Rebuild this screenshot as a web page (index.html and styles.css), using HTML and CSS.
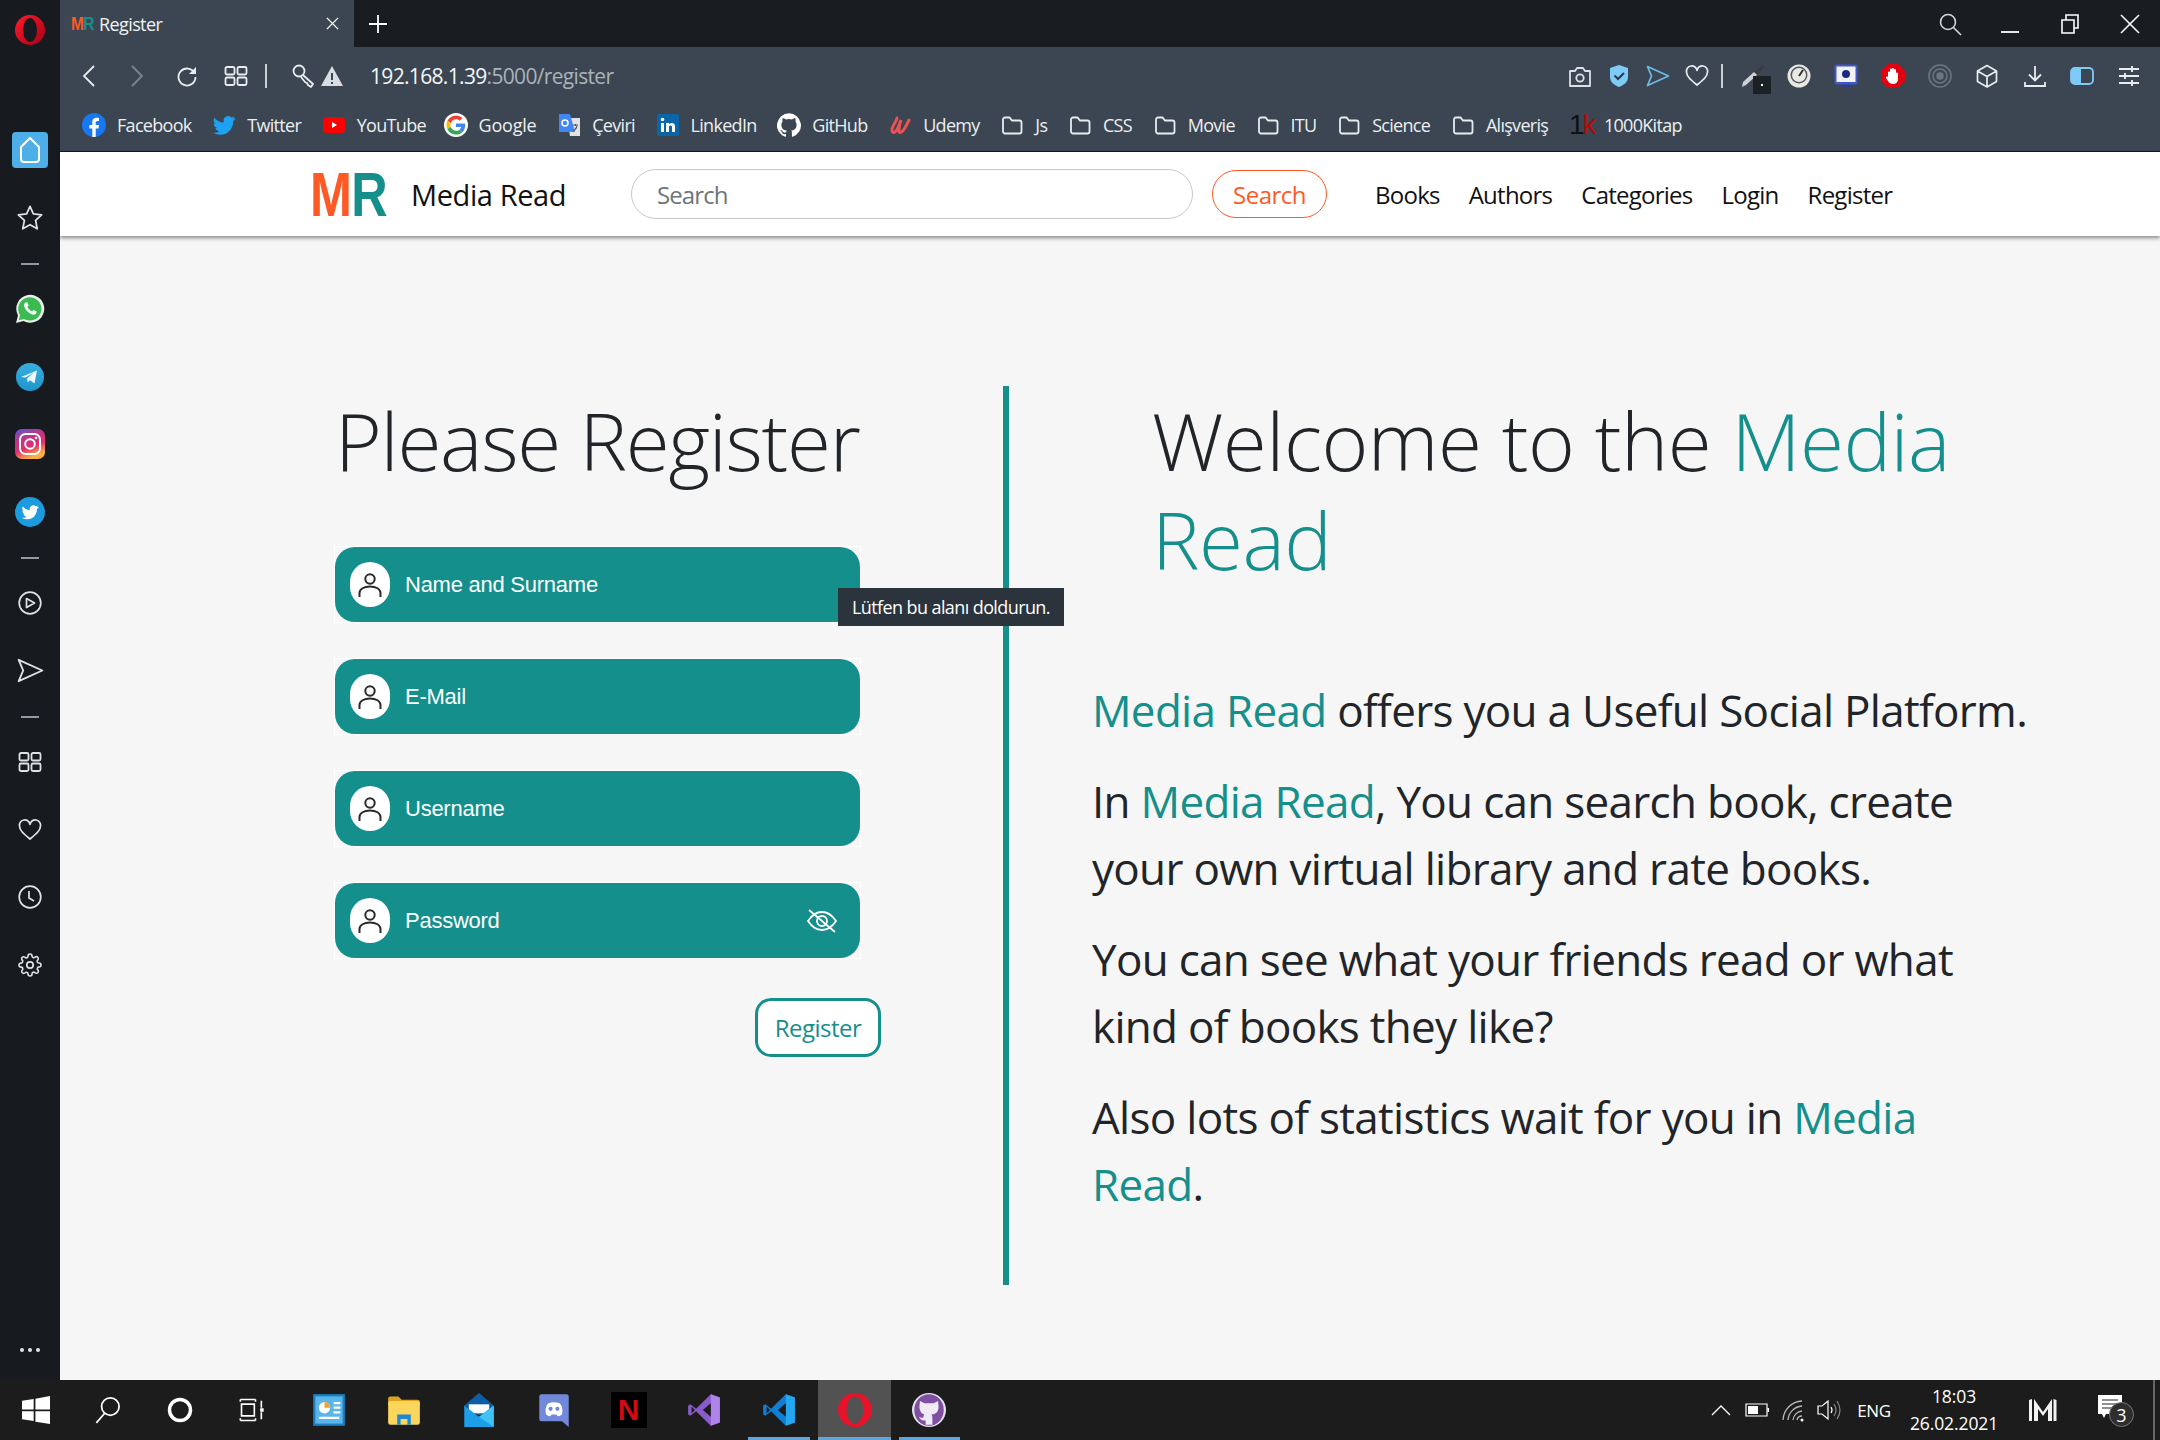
FILE: index.html
```html
<!DOCTYPE html>
<html lang="en">
<head>
<meta charset="utf-8">
<title>Register</title>
<link rel="stylesheet" href="styles.css">
</head>
<body>
<svg class="defs" width="0" height="0">
  <defs>
    <symbol id="folder" viewBox="0 0 24 24"><path d="M3 6.500a2 2 0 0 1 2-2h4.500l2.500 3h7.500a2 2 0 0 1 2 2v9a2 2 0 0 1-2 2H5a2 2 0 0 1-2-2z" fill="none" stroke="#e8ecef" stroke-width="1.800"/></symbol>
    <symbol id="person" viewBox="0 0 24 24"><circle cx="12" cy="6" r="4.700" fill="none" stroke="#2a2a2a" stroke-width="2"/><path d="M1.500 24v-4c0-4 4.500-6.500 10.500-6.500s10.500 2.500 10.500 6.500v4" fill="none" stroke="#2a2a2a" stroke-width="2"/></symbol>
    <symbol id="bird" viewBox="0 0 24 24"><path d="M23 5.100c-.8.4-1.700.6-2.600.7.900-.6 1.700-1.400 2-2.500-.9.500-1.900.9-2.900 1.100A4.600 4.600 0 0 0 11.700 8.600c0 .4 0 .7.1 1A13 13 0 0 1 2.400 4.800a4.600 4.600 0 0 0 1.400 6.100c-.7 0-1.400-.2-2.100-.6v.1c0 2.200 1.600 4.100 3.700 4.500-.7.2-1.400.2-2.100.1.600 1.800 2.300 3.100 4.300 3.200A9.300 9.300 0 0 1 1 19.700 13 13 0 0 0 8.100 21.800c8.500 0 13.100-7 13.100-13.100v-.6c.9-.6 1.700-1.400 2.300-2.300z"/></symbol>
    <symbol id="send" viewBox="0 0 24 24"><path d="M1.500 2.500l21 9.500-21 9.500 4-9.500z" fill="none" stroke="currentColor" stroke-width="1.700" stroke-linejoin="round"/></symbol>
    <symbol id="heart" viewBox="0 0 24 24"><path d="M12 21C6 16 1.500 12.500 1.500 8a5.200 5.200 0 0 1 10.500-1.500A5.200 5.200 0 0 1 22.500 8c0 4.500-4.500 8-10.500 13z" fill="none" stroke="currentColor" stroke-width="1.700" stroke-linejoin="round"/></symbol>
    <symbol id="grid" viewBox="0 0 24 24"><g fill="none" stroke="currentColor" stroke-width="1.800"><rect x="1.500" y="3" width="9" height="7.500" rx="1.500"/><rect x="13.500" y="3" width="9" height="7.500" rx="1.500"/><rect x="1.500" y="13.500" width="9" height="7.500" rx="1.500"/><rect x="13.500" y="13.500" width="9" height="7.500" rx="1.500"/></g></symbol>
  </defs>
</svg>

<div class="app">
  <aside class="sidebar">
    <div class="side-logo">
      <svg width="30" height="30" viewBox="0 0 30 30"><defs><linearGradient id="opg" x1="0" y1="0" x2="1" y2="1"><stop offset="0" stop-color="#ff1b2d"/><stop offset="1" stop-color="#a70014"/></linearGradient></defs><ellipse cx="15" cy="15" rx="15" ry="15" fill="url(#opg)"/><ellipse cx="15" cy="15" rx="7" ry="12" fill="#171b20"/></svg>
    </div>
    <div class="side-slot">
      <span class="side-home"><svg width="24" height="28" viewBox="0 0 24 28"><path d="M12 2L3 11v12a3 3 0 0 0 3 3h12a3 3 0 0 0 3-3V11z" fill="none" stroke="#fff" stroke-width="2" stroke-linejoin="round"/></svg></span>
    </div>
    <div class="side-slot"><svg class="side-ic side-ic-star" viewBox="0 0 24 24"><path d="M12 2l2.900 6.500 7.100.8-5.200 4.800 1.400 7.200L12 17.700l-6.200 3.600 1.400-7.200L2 9.300l7.100-.8z" fill="none" stroke="currentColor" stroke-width="1.500" stroke-linejoin="round"/></svg></div>
    <div class="side-dash"></div>
    <div class="side-slot">
      <svg class="side-ic" viewBox="0 0 30 30"><path d="M1 29l2-7.500A14 14 0 1 1 8.500 27z" fill="#e9efe9"/><path d="M3.800 26.200l1.300-4.900A11.600 11.600 0 1 1 9 25z" fill="#3cba52"/><path d="M10.500 8.500c-1 .6-1.800 2-1.300 3.800 1 3.500 4.500 7.200 8.300 8.300 1.800.5 3.200-.4 3.800-1.300l.3-1.800-3.200-1.600-1.300 1.500c-2-.8-4-2.700-4.800-4.700l1.400-1.300-1.400-3.200z" fill="#fff"/></svg>
    </div>
    <div class="side-slot">
      <svg class="side-ic" viewBox="0 0 30 30"><defs><linearGradient id="tg" x1="0" y1="0" x2="0" y2="1"><stop offset="0" stop-color="#37aee2"/><stop offset="1" stop-color="#1e96c8"/></linearGradient></defs><circle cx="15" cy="15" r="14" fill="url(#tg)"/><path d="M6 15l16-6.500-2.500 13-4.500-3.300-2.300 2.300-.5-4.300 7-6.200-8.500 5.400z" fill="#eef7fb"/></svg>
    </div>
    <div class="side-slot">
      <svg class="side-ic" viewBox="0 0 30 30"><defs><linearGradient id="ig" x1="0" y1="0" x2="0.400" y2="1"><stop offset="0" stop-color="#5b51d8"/><stop offset="0.400" stop-color="#c13584"/><stop offset="0.700" stop-color="#e1306c"/><stop offset="1" stop-color="#fcaf45"/></linearGradient></defs><rect width="30" height="30" rx="7" fill="url(#ig)"/><rect x="5" y="5" width="20" height="20" rx="5.500" fill="none" stroke="#fff" stroke-width="2"/><circle cx="15" cy="15" r="4.800" fill="none" stroke="#fff" stroke-width="2"/><circle cx="21" cy="9" r="1.300" fill="#fff"/></svg>
    </div>
    <div class="side-slot">
      <svg class="side-ic" viewBox="0 0 30 30"><circle cx="15" cy="15" r="15" fill="#1d9bdf"/><svg x="6" y="6" width="18" height="18" fill="#fff"><use href="#bird"/></svg></svg>
    </div>
    <div class="side-dash"></div>
    <div class="side-slot">
      <svg class="side-ic side-ic-sm" viewBox="0 0 24 24"><circle cx="12" cy="12" r="10.800" fill="none" stroke="currentColor" stroke-width="1.700"/><path d="M8.500 7.500l8 4.500-8 4.500z" fill="none" stroke="currentColor" stroke-width="1.700" stroke-linejoin="round"/></svg>
    </div>
    <div class="side-slot"><svg class="side-ic side-ic-md"><use href="#send"/></svg></div>
    <div class="side-dash"></div>
    <div class="side-slot"><svg class="side-ic side-ic-sm"><use href="#grid"/></svg></div>
    <div class="side-slot"><svg class="side-ic side-ic-sm"><use href="#heart"/></svg></div>
    <div class="side-slot">
      <svg class="side-ic side-ic-sm" viewBox="0 0 24 24"><circle cx="12" cy="12" r="10.800" fill="none" stroke="currentColor" stroke-width="1.700"/><path d="M11 6v7l5 3" fill="none" stroke="currentColor" stroke-width="1.700"/></svg>
    </div>
    <div class="side-slot">
      <svg class="side-ic side-ic-sm" viewBox="0 0 24 24"><circle cx="12" cy="12" r="3.200" fill="none" stroke="currentColor" stroke-width="1.700"/><path d="M19.400 15a1.650 1.650 0 0 0 .33 1.820l.06.06a2 2 0 0 1 0 2.830 2 2 0 0 1-2.830 0l-.06-.06a1.650 1.650 0 0 0-1.820-.33 1.650 1.650 0 0 0-1 1.510V21a2 2 0 0 1-2 2 2 2 0 0 1-2-2v-.09A1.650 1.650 0 0 0 9 19.400a1.650 1.650 0 0 0-1.820.33l-.06.06a2 2 0 0 1-2.830 0 2 2 0 0 1 0-2.830l.06-.06a1.650 1.650 0 0 0 .33-1.820 1.650 1.650 0 0 0-1.510-1H3a2 2 0 0 1-2-2 2 2 0 0 1 2-2h.09A1.650 1.650 0 0 0 4.600 9a1.650 1.650 0 0 0-.33-1.820l-.06-.06a2 2 0 0 1 0-2.830 2 2 0 0 1 2.830 0l.06.06a1.650 1.650 0 0 0 1.820.33H9a1.650 1.650 0 0 0 1-1.510V3a2 2 0 0 1 2-2 2 2 0 0 1 2 2v.09a1.650 1.650 0 0 0 1 1.510 1.650 1.650 0 0 0 1.820-.33l.06-.06a2 2 0 0 1 2.830 0 2 2 0 0 1 0 2.830l-.06.06a1.650 1.650 0 0 0-.33 1.820V9a1.650 1.650 0 0 0 1.510 1H21a2 2 0 0 1 2 2 2 2 0 0 1-2 2h-.09a1.650 1.650 0 0 0-1.510 1z" fill="none" stroke="currentColor" stroke-width="1.600" stroke-linejoin="round"/></svg>
    </div>
    <div class="side-more"><i></i><i></i><i></i></div>
  </aside>

  <div class="content">
    <header class="browser">
      <div class="tabstrip">
        <div class="tab">
          <span class="mini-logo"><span class="mini-m">M</span><span class="mini-r">R</span></span>
          <span class="tab-title">Register</span>
          <svg class="tab-close" viewBox="0 0 16 16"><path d="M2 2l12 12M14 2L2 14" stroke="#fff" stroke-width="1.500"/></svg>
        </div>
        <svg class="tab-add" viewBox="0 0 18 18"><path d="M9 0v18M0 9h18" stroke="#fff" stroke-width="1.800"/></svg>
        <div class="win-ctrls">
          <svg class="win-ic" viewBox="0 0 24 24"><circle cx="10" cy="10" r="7.500" fill="none" stroke="#d5d8dc" stroke-width="1.600"/><path d="M15.500 15.500L23 23" stroke="#d5d8dc" stroke-width="1.600"/></svg>
          <svg class="win-ic" viewBox="0 0 24 24"><path d="M3 20h18" stroke="#fff" stroke-width="1.800"/></svg>
          <svg class="win-ic" viewBox="0 0 24 24"><path d="M4 8h12v13H4zM8 8V3h12v13h-4" fill="none" stroke="#fff" stroke-width="1.600"/></svg>
          <svg class="win-ic" viewBox="0 0 24 24"><path d="M3 3l18 18M21 3L3 21" stroke="#fff" stroke-width="1.600"/></svg>
        </div>
      </div>

      <div class="toolbar">
        <svg class="tb-ic" viewBox="0 0 24 24"><path d="M16 2L6 12l10 10" fill="none" stroke="#e8ecef" stroke-width="1.800"/></svg>
        <svg class="tb-ic" viewBox="0 0 24 24"><path d="M8 2l10 10L8 22" fill="none" stroke="#7b858f" stroke-width="1.800"/></svg>
        <svg class="tb-ic tb-wide" viewBox="0 0 24 24"><path d="M19.500 9A8.500 8.500 0 1 0 20.500 13" fill="none" stroke="#e8ecef" stroke-width="1.800"/><path d="M21 3v7h-7z" fill="#e8ecef"/></svg>
        <svg class="tb-ic tb-icon-light tb-gridbtn"><use href="#grid"/></svg>
        <span class="tb-sep"></span>
        <svg class="tb-ic tb-key" viewBox="0 0 24 24"><circle cx="8" cy="7" r="5.500" fill="none" stroke="#e8ecef" stroke-width="1.800"/><path d="M12 11l10 9-2 3-3-2-1-2-2-1-4-5" fill="none" stroke="#e8ecef" stroke-width="1.800" stroke-linejoin="round"/></svg>
        <svg class="tb-ic tb-warn" viewBox="0 0 24 24"><path d="M12 2L1 22h22z" fill="#d9dce0"/><path d="M12 9v7M12 18v2" stroke="#3b4652" stroke-width="2"/></svg>
        <div class="url"><span class="url-host">192.168.1.39</span>:5000/register</div>
        <div class="tb-right">
          <div class="tb-group tb-group-tight">
            <svg class="tb-ic" viewBox="0 0 24 24"><path d="M2 7h5l2-3h6l2 3h5v15H2z" fill="none" stroke="#dde1e5" stroke-width="1.800" stroke-linejoin="round"/><circle cx="12" cy="14" r="3.700" fill="none" stroke="#dde1e5" stroke-width="1.800"/></svg>
            <svg class="tb-ic" viewBox="0 0 24 24"><path d="M12 1l9 3v9c0 5-4 8-9 10-5-2-9-5-9-10V4z" fill="#7fcbf7"/><path d="M7.500 11.500l3.500 3.500 6-6" fill="none" stroke="#2d3a46" stroke-width="2"/></svg>
            <svg class="tb-ic tb-blue"><use href="#send"/></svg>
            <svg class="tb-ic tb-icon-light"><use href="#heart"/></svg>
          </div>
          <span class="tb-sep tb-sep-right"></span>
          <div class="tb-group">
            <span class="tb-dropper">
              <svg class="tb-ic" viewBox="0 0 24 24"><path d="M23 1l1 2-7 8-3-3z" fill="#3c3c3c"/><path d="M14 8l3 3L6 21l-4 2 1-5z" fill="#cfd2d5"/></svg>
              <span class="dropper-badge"><i></i></span>
            </span>
            <svg class="tb-ic" viewBox="0 0 24 24"><circle cx="12" cy="12" r="11.500" fill="#e8e8e4"/><circle cx="12" cy="11" r="8.500" fill="#57595b"/><circle cx="12" cy="11" r="7" fill="#e8e8e4"/><path d="M12 12l4-6" stroke="#333" stroke-width="2"/></svg>
            <svg class="tb-ic" viewBox="0 0 24 24"><path d="M7 19h10l-1.500 4h-7z" fill="#2a3c8f"/><rect x="0.500" y="0.500" width="23" height="20" rx="1.500" fill="#3f57c8"/><rect x="2.500" y="2.500" width="19" height="15.500" fill="#f0f2f6"/><circle cx="12" cy="10" r="4" fill="#1b2a7d"/></svg>
            <svg class="tb-ic" viewBox="0 0 24 24"><path d="M7 0h10l7 7v10l-7 7H7l-7-7V7z" fill="#e3000f"/><path d="M7 13V8.500a1 1 0 0 1 2 0V5.500a1 1 0 0 1 2 0V5a1 1 0 0 1 2 0v1a1 1 0 0 1 2 0v3.500a1 1 0 0 1 2 0V15c0 3-2 5-5 5-2.500 0-4-1-5-3l-2-3c-.5-1 1-2 2-1z" fill="#fff"/></svg>
            <svg class="tb-ic" viewBox="0 0 24 24"><g fill="none" stroke="#6e7780" stroke-width="1.500"><circle cx="12" cy="12" r="11"/><circle cx="12" cy="12" r="7"/><circle cx="12" cy="12" r="3" fill="#6e7780"/></g></svg>
            <svg class="tb-ic" viewBox="0 0 24 24"><path d="M12 1.500l9.500 5.500v10.500L12 23l-9.500-5.500V7zM2.500 7l9.500 5.500L21.500 7M12 12.500V23" fill="none" stroke="#e8ecef" stroke-width="1.700" stroke-linejoin="round"/></svg>
            <svg class="tb-ic" viewBox="0 0 24 24"><path d="M12 2v14M6 10.500l6 6 6-6M2 18v4h20v-4" fill="none" stroke="#e8ecef" stroke-width="1.800"/></svg>
            <svg class="tb-ic" viewBox="0 0 24 24"><rect x="1" y="4" width="22" height="16" rx="4" fill="none" stroke="#7fcbf7" stroke-width="1.800"/><path d="M5 4h6v16H5a4 4 0 0 1-4-4V8a4 4 0 0 1 4-4z" fill="#7fcbf7"/></svg>
            <svg class="tb-ic" viewBox="0 0 24 24"><path d="M2 5h20M2 12h20M2 19h20M15 2v6M8 9v6M15 16v6" fill="none" stroke="#e8ecef" stroke-width="1.900"/></svg>
          </div>
        </div>
      </div>

      <nav class="bookmarks">
        <span class="bm"><svg class="bm-ic" viewBox="0 0 24 24"><circle cx="12" cy="12" r="12" fill="#1877f2"/><path d="M16.500 15.500l.5-3.500h-3.300V9.800c0-1 .5-1.900 2-1.900H17V5c-2.800-.6-6.700-.6-6.700 4.200V12H7.300v3.500h3V24h3.400v-8.500z" fill="#fff"/></svg>Facebook</span>
        <span class="bm"><svg class="bm-ic bm-tw"><use href="#bird"/></svg>Twitter</span>
        <span class="bm"><svg class="bm-ic" viewBox="0 0 24 24"><rect x="1" y="4" width="22" height="16" rx="4" fill="#f00"/><path d="M10 9l5 3-5 3z" fill="#fff"/></svg>YouTube</span>
        <span class="bm bm-g"><svg class="bm-ic" viewBox="-6 -6 60 60"><circle cx="24" cy="24" r="30" fill="#fff"/><path fill="#EA4335" d="M24 9.500c3.540 0 6.710 1.220 9.210 3.600l6.850-6.850C35.900 2.380 30.470 0 24 0 14.620 0 6.510 5.380 2.560 13.220l7.980 6.190C12.430 13.720 17.740 9.500 24 9.500z"/><path fill="#4285F4" d="M46.980 24.550c0-1.570-.15-3.090-.38-4.550H24v9.020h12.940c-.58 2.960-2.260 5.480-4.780 7.180l7.730 6c4.510-4.180 7.090-10.360 7.090-17.650z"/><path fill="#FBBC05" d="M10.530 28.590c-.48-1.450-.76-2.990-.76-4.590s.27-3.140.76-4.590l-7.980-6.190C.92 16.460 0 20.120 0 24c0 3.880.92 7.540 2.560 10.780l7.970-6.190z"/><path fill="#34A853" d="M24 48c6.480 0 11.930-2.130 15.890-5.810l-7.730-6c-2.150 1.450-4.920 2.300-8.160 2.300-6.260 0-11.570-4.220-13.470-9.910l-7.980 6.190C6.510 42.620 14.620 48 24 48z"/></svg>Google</span>
        <span class="bm"><svg class="bm-ic" viewBox="0 0 24 24"><path d="M10 5h13v18H13z" fill="#dfe2e6"/><path d="M2 1h11l5 18H2z" fill="#4285f4"/><path d="M16 12h5M18.500 11v2M20 13c-.5 2-2 4-3.500 5" stroke="#555" stroke-width="1.200" fill="none"/><circle cx="8" cy="10" r="3" fill="none" stroke="#fff" stroke-width="1.500"/></svg>Çeviri</span>
        <span class="bm"><svg class="bm-ic" viewBox="0 0 24 24"><rect x="1" y="1" width="22" height="22" rx="2" fill="#0a66a8"/><path d="M5 10h3v9H5zM10 10h3v1.500c1-2 6-2.500 6 2V19h-3v-5c0-2-3-2-3 0v5h-3z" fill="#fff"/><circle cx="6.500" cy="6.500" r="1.800" fill="#fff"/></svg>LinkedIn</span>
        <span class="bm"><svg class="bm-ic bm-gh" viewBox="0 0 24 24"><path d="M12 .3a12 12 0 0 0-3.800 23.400c.6.100.8-.3.8-.6v-2c-3.300.7-4-1.600-4-1.600-.5-1.400-1.300-1.800-1.300-1.800-1.100-.7.100-.7.100-.7 1.200.1 1.800 1.200 1.800 1.200 1.100 1.800 2.800 1.300 3.500 1 .1-.8.400-1.300.8-1.600-2.700-.3-5.500-1.300-5.500-5.900 0-1.300.5-2.400 1.200-3.200-.1-.3-.5-1.500.1-3.200 0 0 1-.3 3.300 1.200a11.500 11.500 0 0 1 6 0c2.300-1.500 3.300-1.200 3.300-1.200.7 1.700.2 2.900.1 3.200.8.800 1.200 1.900 1.200 3.200 0 4.600-2.800 5.600-5.500 5.900.4.400.8 1.100.8 2.200v3.300c0 .3.200.7.8.6A12 12 0 0 0 12 .3z"/></svg>GitHub</span>
        <span class="bm"><svg class="bm-ic" viewBox="0 0 24 24"><path d="M9 5C8 10 3 14 4 18c1 3 4 1 6-3l3-8c-2 6-3 12-1 12.500 2.500.5 6-6 9-12.500" fill="none" stroke="#ec5252" stroke-width="3" stroke-linecap="round"/></svg>Udemy</span>
        <span class="bm"><svg class="bm-ic"><use href="#folder"/></svg>Js</span>
        <span class="bm"><svg class="bm-ic"><use href="#folder"/></svg>CSS</span>
        <span class="bm"><svg class="bm-ic"><use href="#folder"/></svg>Movie</span>
        <span class="bm"><svg class="bm-ic"><use href="#folder"/></svg>ITU</span>
        <span class="bm"><svg class="bm-ic"><use href="#folder"/></svg>Science</span>
        <span class="bm"><svg class="bm-ic"><use href="#folder"/></svg>Alışveriş</span>
        <span class="bm"><span class="bm-1k"><span class="k1">1</span><span class="k2">k</span></span>1000Kitap</span>
      </nav>
    </header>

    <div class="site">
      <div class="site-nav">
        <a class="brand"><span class="brand-logo"><span class="logo-m">M</span><span class="logo-r">R</span></span><span class="brand-name">Media Read</span></a>
        <div class="search-box">Search</div>
        <button class="search-btn">Search</button>
        <ul class="nav-links">
          <li>Books</li><li>Authors</li><li>Categories</li><li>Login</li><li>Register</li>
        </ul>
      </div>

      <main class="page">
        <section class="col-form">
          <h1 class="title">Please Register</h1>
          <form class="form">
            <div class="field">
              <div class="field-inner"><span class="field-ic"><svg><use href="#person"/></svg></span><span class="field-text">Name and Surname</span></div>
              <div class="tooltip">Lütfen bu alanı doldurun.</div>
            </div>
            <div class="field"><div class="field-inner"><span class="field-ic"><svg><use href="#person"/></svg></span><span class="field-text">E-Mail</span></div></div>
            <div class="field"><div class="field-inner"><span class="field-ic"><svg><use href="#person"/></svg></span><span class="field-text">Username</span></div></div>
            <div class="field">
              <div class="field-inner"><span class="field-ic"><svg><use href="#person"/></svg></span><span class="field-text">Password</span>
                <svg class="eye" viewBox="0 0 32 24"><g fill="none" stroke="#fff" stroke-width="1.800"><path d="M2 12c4-6 9-9 14-9s10 3 14 9c-4 6-9 9-14 9S6 18 2 12z"/><circle cx="16" cy="12" r="5"/><path d="M3 1l26 22"/></g></svg>
              </div>
            </div>
            <div class="form-actions"><button class="register-btn" type="button">Register</button></div>
          </form>
        </section>
        <section class="col-info">
          <h1 class="title title-info">Welcome to the <span class="teal">Media Read</span></h1>
          <p><span class="teal">Media Read</span> offers you a Useful Social Platform.</p>
          <p>In <span class="teal">Media Read</span>, You can search book, create your own virtual library and rate books.</p>
          <p>You can see what your friends read or what kind of books they like?</p>
          <p>Also lots of statistics wait for you in <span class="teal">Media Read</span>.</p>
        </section>
      </main>
    </div>
  </div>

  <footer class="taskbar">
    <span class="ts"><svg class="ts-ic" viewBox="0 0 24 24"><path d="M0 4l10-1.500v9H0zM11.500 2.300L24 0v11.500H11.500zM0 13h10v8.500L0 20zM11.500 13H24v11l-12.500-2z" fill="#fff"/></svg></span>
    <span class="ts"><svg class="ts-ic" viewBox="0 0 24 24"><circle cx="14" cy="9" r="7.500" fill="none" stroke="#fff" stroke-width="1.500"/><path d="M9 15L2 23" stroke="#fff" stroke-width="1.500"/></svg></span>
    <span class="ts"><svg class="ts-ic" viewBox="0 0 24 24"><circle cx="12" cy="12" r="9" fill="none" stroke="#fff" stroke-width="3"/></svg></span>
    <span class="ts"><svg class="ts-ic" viewBox="0 0 24 24"><path d="M2 3h13M2 21h13M3 7h11v10H3zM2 3v2M15 3v2M2 19v2M15 19v2M20 4v6M20 14v6" fill="none" stroke="#fff" stroke-width="1.400"/><rect x="19" y="10.500" width="3" height="3" fill="#fff"/></svg></span>
    <span class="ts ts-app ts-first"><svg class="ts-ic ts-big" viewBox="0 0 30 30"><rect x="1" y="1" width="28" height="28" fill="#1a7fc3"/><rect x="3" y="3" width="24" height="24" fill="#5ab6ea"/><circle cx="11" cy="13" r="5" fill="#fff"/><path d="M11 13V8a5 5 0 0 1 5 5z" fill="#f1a32a"/><path d="M19 9h6M19 13h6M19 17h6M6 22h18" stroke="#fff" stroke-width="2"/></svg></span>
    <span class="ts ts-app"><svg class="ts-ic ts-big" viewBox="0 0 30 30"><path d="M1 5a2 2 0 0 1 2-2h7l3 3h14a2 2 0 0 1 2 2v3H1z" fill="#e0a21c"/><rect x="1" y="7" width="28" height="21" rx="2" fill="#fbd65c"/><path d="M9 28v-9h12v9h-3v-5h-6v5z" fill="#1e88d8"/></svg></span>
    <span class="ts ts-app"><svg class="ts-ic ts-big" viewBox="0 0 30 30"><path d="M15 0L28 11 15 20 2 11z" fill="#0c5ea8"/><path d="M6 10h18v8H6z" fill="#fff"/><path d="M2 11l13 10 13-10v19H2z" fill="#1c9fe8"/><path d="M15 21l13-10v19z" fill="#3fc3f5"/></svg></span>
    <span class="ts ts-app"><svg class="ts-ic ts-big" viewBox="0 0 30 30"><path d="M4 1h22a2 2 0 0 1 2 2v27l-6-5H4a2 2 0 0 1-2-2V3a2 2 0 0 1 2-2z" fill="#7289da"/><path d="M8 19c-1-5 0-8 2-10 3-1 7-1 10 0 2 2 3 5 2 10-1 1-3 2-4 1l-1-1h-4l-1 1c-1 1-3 0-4-1z" fill="#fff"/><circle cx="12" cy="14" r="1.800" fill="#7289da"/><circle cx="18" cy="14" r="1.800" fill="#7289da"/></svg></span>
    <span class="ts ts-app"><span class="netflix">N</span></span>
    <span class="ts ts-app"><svg class="ts-ic ts-big" viewBox="0 0 30 30"><path d="M21 1l8 3v22l-8 3-13-13-5 4-2-1V11l2-1 5 4z" fill="#8a5ccb"/><path d="M21 1l8 3v22l-8 3z" fill="#b083ea"/><path d="M21 9l-7 6 7 6z" fill="#1c1c1c"/><path d="M4 12v6l3-3z" fill="#1c1c1c"/></svg></span>
    <span class="ts ts-app ts-open ts-open-a"><svg class="ts-ic ts-big" viewBox="0 0 30 30"><path d="M21 1l8 3v22l-8 3-13-13-5 4-2-1V11l2-1 5 4z" fill="#0f7fd6"/><path d="M21 1l8 3v22l-8 3z" fill="#22a7f0"/><path d="M21 9l-7 6 7 6z" fill="#1c1c1c"/><path d="M4 12v6l3-3z" fill="#1c1c1c"/></svg></span>
    <span class="ts ts-app ts-open ts-active"><svg class="ts-ic ts-big" viewBox="0 0 30 30"><ellipse cx="15" cy="15" rx="15" ry="15" fill="#e8132a"/><ellipse cx="15" cy="15" rx="7.500" ry="12" fill="#525252"/></svg></span>
    <span class="ts ts-app ts-open ts-open-c"><svg class="ts-ic ts-big" viewBox="0 0 30 30"><ellipse cx="15" cy="15" rx="15" ry="15" fill="#e6e2ec"/><ellipse cx="15" cy="15" rx="13" ry="14" fill="#7e4fa3"/><path d="M7 15c-1-3 0-5 0-8l4 2h8l4-2c0 3 1 5 0 8-1 3-4 4-6 4 1 1 1 2 1 3v6h-6v-4c-3 1-5-1-6-3 2 1 3 1 4 1 0-1 0-2 1-3-1 0-3-1-4-4z" fill="#f0eaf5"/></svg></span>

    <div class="tray">
      <span class="tray-slot"><svg class="tray-ic" viewBox="0 0 24 24"><path d="M3 17l9-9 9 9" fill="none" stroke="#fff" stroke-width="1.300"/></svg></span>
      <span class="tray-slot"><svg class="tray-ic" viewBox="0 0 24 16"><path d="M1 2h21v12H1z" fill="none" stroke="#fff" stroke-width="1.200"/><rect x="3" y="4" width="10" height="8" fill="#fff"/><rect x="22.500" y="6" width="1.500" height="4" fill="#fff"/></svg></span>
      <span class="tray-slot"><svg class="tray-ic" viewBox="0 0 24 24"><g fill="none" stroke-width="1.300" stroke="#b8b8b8"><path d="M2 22A20 20 0 0 1 21 3"/><path d="M7 22A15 15 0 0 1 21 8"/><path d="M12 22A10 10 0 0 1 21 13"/><path d="M16 22A5 5 0 0 1 21 18"/></g><circle cx="21" cy="22" r="1.500" fill="#fff"/></svg></span>
      <span class="tray-slot"><svg class="tray-ic" viewBox="0 0 24 24"><path d="M1 8h4l6-5v18l-6-5H1z" fill="none" stroke="#fff" stroke-width="1.200"/><path d="M14 9q2 3 0 6" fill="none" stroke="#fff" stroke-width="1.200"/><path d="M17 6q4 6 0 12M20 3q6 9 0 18" fill="none" stroke="#888" stroke-width="1.200"/></svg></span>
      <span class="tray-lang">ENG</span>
      <span class="tray-clock"><span>18:03</span><span>26.02.2021</span></span>
      <span class="tray-m"><svg viewBox="0 0 28 24" width="28" height="24"><path d="M0 2l3-1v22H0zM24.500 1l3 1v21h-3zM5 1l9 13 9-13v22h-4V11l-5 7-5-7v12H5z" fill="#f2f2f2"/></svg></span>
      <span class="tray-notif">
        <svg viewBox="0 0 24 24" width="24" height="24"><path d="M0 0h24v19H8l-2 4-2-4H0z" fill="#fff"/><path d="M4 5h16M4 9h16M4 13h10" stroke="#222" stroke-width="1.200"/></svg>
        <span class="notif-badge">3</span>
      </span>
      <span class="tray-edge"></span>
    </div>
  </footer>
</div>
</body>
</html>
```

FILE: styles.css
```css
* { box-sizing: border-box; }
html, body { margin: 0; padding: 0; height: 100%; }
body { font-family: "Open Sans", "Noto Sans", sans-serif; background: #f6f6f6; color: #212529; overflow: hidden; }
.defs { position: absolute; }
.app { display: grid; grid-template-columns: 60px 1fr; grid-template-rows: 1380px 60px; width: 2160px; height: 1440px; }

/* sidebar */
.sidebar { background: #171b20; color: #dfe3e7; display: flex; flex-direction: column; align-items: center; }
.side-logo { height: 60px; display: flex; align-items: center; justify-content: center; }
.side-slot { height: 67.500px; flex: none; display: flex; align-items: center; justify-content: center; width: 100%; }
.side-slot:nth-child(2) { margin-top: 56px; height: 68px; }
.side-home { width: 36px; height: 36px; border-radius: 4px; background: #4daee8; display: flex; align-items: center; justify-content: center; }
.side-ic { width: 30px; height: 30px; color: #dfe3e7; }
.side-ic-sm { width: 24px; height: 24px; }
.side-ic-md { width: 27px; height: 27px; }
.side-ic-star { width: 28px; height: 28px; }
.side-dash { width: 18px; height: 2px; background: #8f9aa3; margin: 11px 0; flex: none; }
.side-more { margin-top: auto; margin-bottom: 28px; display: flex; gap: 4px; }
.side-more i { width: 4px; height: 4px; border-radius: 50%; background: #dfe3e7; }

/* browser chrome */
.content { display: flex; flex-direction: column; min-width: 0; }
.browser { flex: none; background: #3b4652; color: #e8ecef; font-size: 18px; border-bottom: 1px solid #14181c; height: 152px; }
.tabstrip { height: 47px; background: #191c21; display: flex; align-items: center; }
.tab { width: 294px; height: 47px; background: #3b4652; display: flex; align-items: center; padding: 0 14px 0 11px; }
.mini-logo { font: 700 19px/1 "Liberation Sans", sans-serif; display: inline-block; width: 25px; margin-right: 3px; transform: scaleX(.82); transform-origin: left center; white-space: nowrap; letter-spacing: -1px; }
.mini-m { color: #ff5a26; }
.mini-r { color: #158f8c; }
.tab-title { flex: 1; color: #f1f3f5; letter-spacing: -.6px; }
.tab-close { width: 15px; height: 15px; }
.tab-add { width: 18px; height: 18px; margin-left: 15px; }
.win-ctrls { margin-left: auto; display: flex; gap: 36px; padding-right: 18px; }
.win-ic { width: 24px; height: 24px; }

.toolbar { height: 57px; display: flex; align-items: center; padding-left: 18px; }
.tb-ic { width: 24px; height: 24px; flex: none; }
.toolbar > .tb-ic + .tb-ic { margin-left: 22px; }
.toolbar > .tb-ic.tb-wide { margin-left: 27px; }
.toolbar > .tb-ic.tb-gridbtn { margin-left: 25px; }
.toolbar > .tb-ic.tb-key { margin-left: 24px; }
.toolbar > .tb-ic.tb-warn { margin-left: 5px; }
.tb-icon-light { color: #e8ecef; }
.tb-blue { color: #6fbbe8; }
.tb-sep { width: 2px; height: 24px; background: #c9ced3; margin-left: 17px; flex: none; }
.url { margin-left: 26px; font-size: 21px; color: #aab2ba; letter-spacing: -.67px; }
.url-host { color: #f4f6f7; }
.tb-right { margin-left: auto; display: flex; align-items: center; padding-right: 19px; }
.tb-group { display: flex; align-items: center; gap: 23.200px; }
.tb-group-tight { gap: 15px; }
.tb-sep-right { margin: 0 17px 0 12px; }
.tb-dropper { position: relative; display: flex; }
.dropper-badge { position: absolute; left: 13px; top: 12px; width: 18px; height: 18px; background: #1c2126; display: flex; align-items: center; justify-content: center; }
.dropper-badge i { width: 2px; height: 2px; background: #fff; }

.bookmarks { height: 42px; display: flex; align-items: center; padding-left: 22px; gap: 20.700px; white-space: nowrap; }
.bm { display: flex; align-items: center; gap: 11px; color: #eceff1; font-size: 18px; letter-spacing: -.7px; }
.bm-g { margin-left: -3px; letter-spacing: -.2px; }
.bm-ic { width: 24px; height: 24px; flex: none; }
.bm-tw { fill: #1da1f2; }
.bm-gh { fill: #fff; }
.bm-1k { width: 24px; font: 400 28px/1 "Liberation Sans", sans-serif; letter-spacing: -2px; }
.k1 { color: #111; }
.k2 { color: #b40a0a; }

/* site */
.site { flex: 1; display: flex; flex-direction: column; min-height: 0; }
.site-nav { flex: none; height: 84px; background: #fff; box-shadow: 0 2px 4px rgba(0,0,0,.45); display: flex; align-items: center; padding-left: 251px; position: relative; }
.brand { display: flex; align-items: center; width: 320px; flex: none; }
.brand-logo { font: 700 63px/1 "Liberation Sans", sans-serif; width: 76px; margin-left: -1px; margin-right: 25px; transform: scaleX(.8); transform-origin: left center; white-space: nowrap; letter-spacing: -1px; flex: none; }
.logo-m { color: #ff5a26; }
.logo-r { color: #158f8c; }
.brand-name { font-size: 29px; color: #111; letter-spacing: -.4px; white-space: nowrap; }
.search-box { width: 562px; height: 50px; border: 1px solid #c8c8c8; border-radius: 25px; background: #fff; color: #6c757d; font-size: 24px; display: flex; align-items: center; padding-left: 25px; flex: none; letter-spacing: -.9px; }
.search-btn { margin-left: 19px; width: 115px; height: 48px; border: 1px solid #ff5a26; border-radius: 24px; background: #fff; color: #ff5a26; font: 400 24px "Open Sans", sans-serif; flex: none; padding: 0; letter-spacing: -.5px; }
.nav-links { list-style: none; display: flex; margin: 0 0 0 48px; padding: 0; gap: 29px; font-size: 24px; color: #111; letter-spacing: -.75px; }

.page { flex: 1; display: flex; align-items: flex-start; padding: 150px 0 0 274px; min-height: 0; }
.col-form { width: 675px; height: 899px; border-right: 6px solid #158f8c; flex: none; }
.title { font-weight: 300; font-size: 80px; line-height: 99px; margin: 4px 0 0; color: #212529; letter-spacing: -1.250px; }
.col-form .title { padding-left: 1px; }
.form { margin-top: 57px; width: 547px; }
.field { width: 527px; height: 77px; border: 1px solid #fff; margin-bottom: 35px; position: relative; }
.field-inner { height: 100%; background: #158f8c; border-radius: 20px; display: flex; align-items: center; padding-left: 15px; }
.field-ic { width: 40px; height: 45px; border-radius: 20px; background: #fff; display: flex; align-items: center; justify-content: center; flex: none; }
.field-ic svg { width: 24px; height: 24px; }
.field-text { font: 400 22px "Liberation Sans", sans-serif; color: #fff; margin-left: 15px; letter-spacing: -.25px; }
.eye { width: 32px; height: 24px; margin-left: auto; margin-right: 22px; }
.tooltip { position: absolute; left: 503px; top: 41px; width: 226px; height: 38px; background: #2b343c; color: #fff; font-size: 18px; display: flex; align-items: center; justify-content: center; white-space: nowrap; letter-spacing: -.6px; z-index: 2; }
.form-actions { display: flex; justify-content: flex-end; padding-top: 4px; }
.register-btn { width: 126px; height: 59px; border: 3px solid #158f8c; border-radius: 16px; background: #fff; color: #158f8c; font: 400 24px "Open Sans", sans-serif; padding: 0; letter-spacing: -.5px; }

.col-info { padding-left: 83px; width: 1060px; flex: none; }
.title-info { padding-left: 60px; letter-spacing: -.5px; }
.teal { color: #158f8c; }
.col-info .title-info { margin-bottom: 89px; }
.col-info p { margin: 0 0 24px; max-width: 940px; font-size: 44px; line-height: 67px; color: #212529; letter-spacing: -.7px; }

/* taskbar */
.taskbar { grid-column: 1 / -1; background: #1c1c1c; display: flex; align-items: stretch; height: 60px; color: #fff; }
.ts { width: 72px; flex: none; display: flex; align-items: center; justify-content: center; position: relative; }
.ts-app { width: 75px; }
.ts-first { margin-left: 3px; }
.ts-ic { width: 28px; height: 28px; }
.ts-big { width: 34px; height: 36px; }
.netflix { width: 36px; height: 36px; background: #000; color: #d10a14; font: 700 30px/36px "Liberation Sans", sans-serif; text-align: center; }
.ts-open::after { content: ""; position: absolute; left: 7px; right: 6px; bottom: 0; height: 3px; background: #5ca5dd; }
.ts-active { background: #525252; margin-left: 2px; width: 73px; }
.ts-active::after { left: 0; right: 0; }
.ts-open-c::after { left: 8px; right: 6px; }
.tray { margin-left: auto; display: flex; align-items: center; }
.tray-slot { width: 36px; display: flex; justify-content: center; flex: none; }
.tray-ic { width: 24px; height: 24px; }
.tray-lang { width: 54px; text-align: center; font: 400 17px "Open Sans", sans-serif; letter-spacing: -.3px; }
.tray-clock { width: 106px; display: flex; flex-direction: column; align-items: center; font-size: 17.500px; line-height: 27px; letter-spacing: -.1px; }
.tray-m { width: 72px; display: flex; justify-content: center; }
.tray-notif { width: 62px; position: relative; display: flex; justify-content: center; margin-top: -6px; }
.notif-badge { position: absolute; left: 30px; top: 7px; width: 25px; height: 25px; border-radius: 50%; background: #2e2e2e; border: 1px solid #777; font-size: 18px; font-weight: 400; display: flex; align-items: center; justify-content: center; }
.tray-edge { width: 19px; height: 60px; flex: none; display: flex; }
.tray-edge::before { content: ""; width: 2px; height: 60px; margin-left: 12px; background: #666; }
```
